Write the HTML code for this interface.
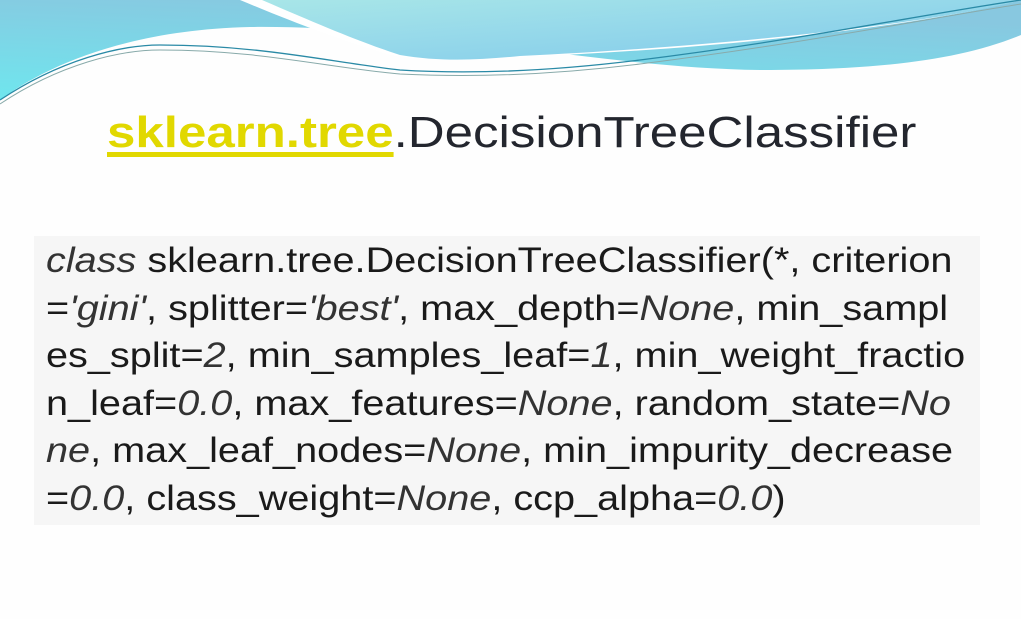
<!DOCTYPE html>
<html><head><meta charset="utf-8"><style>
html,body{margin:0;padding:0}
body{width:1021px;height:619px;overflow:hidden;background:#fefefe;position:relative;font-family:"Liberation Sans",sans-serif}
svg{position:absolute;left:0;top:0}
.title{position:absolute;left:107px;top:105px;font-size:44px;color:#23262e;white-space:nowrap;line-height:56px;transform:scaleX(1.16);transform-origin:0 0}
.title b{color:#e1d800;text-decoration:underline;text-decoration-thickness:5px;text-underline-offset:5px}
.box{position:absolute;left:34px;top:236px;width:946px;height:289px;background:#f6f6f6}
.code{position:absolute;left:46px;top:237px;font-size:35.5px;line-height:47.6px;color:#1a1a1a;white-space:pre;transform:scaleX(1.117);transform-origin:0 0}
i{font-style:italic;color:#333}
</style></head><body>
<svg width="1021" height="130" viewBox="0 0 1021 130">
<defs>
<linearGradient id="g1" x1="0" y1="1" x2="0.4" y2="0"><stop offset="0" stop-color="#6fe6ee"/><stop offset="1" stop-color="#88c8e0"/></linearGradient>
<linearGradient id="g2" x1="0" y1="0" x2="1" y2="1"><stop offset="0" stop-color="#a8e6e8"/><stop offset="1" stop-color="#7fc8ec"/></linearGradient>
</defs>
<path d="M0,0 H1021 V35 C960,60 880,70 760,70 C600,68 420,25 250,27 C120,30 40,70 0,100 Z" fill="url(#g1)"/>
<path d="M240,0 C300,25 340,40 390,55 C430,62 460,60 500,58 C700,50 900,30 1021,0 Z" fill="#fff"/>
<path d="M262,0 C320,25 360,42 400,55 C440,62 480,60 520,56 C750,45 950,20 1021,0 Z" fill="url(#g2)"/>
<path d="M0,100 C60,60 120,45 160,45 C260,45 330,62 400,70 C480,75 560,70 640,60 C800,40 920,15 1021,0" fill="none" stroke="#2a8aa6" stroke-width="1.3"/>
<path d="M0,104 C60,64 120,50 160,50 C260,50 330,68 400,74 C480,78 560,74 640,64 C800,44 920,20 1021,4" fill="none" stroke="#8aa" stroke-width="1"/>
</svg>
<div class="title"><b>sklearn.tree</b>.DecisionTreeClassifier</div>
<div class="box"></div>
<div class="code"><i>class</i> sklearn.tree.DecisionTreeClassifier(*, criterion
=<i>'gini'</i>, splitter=<i>'best'</i>, max_depth=<i>None</i>, min_sampl
es_split=<i>2</i>, min_samples_leaf=<i>1</i>, min_weight_fractio
n_leaf=<i>0.0</i>, max_features=<i>None</i>, random_state=<i>No</i>
<i>ne</i>, max_leaf_nodes=<i>None</i>, min_impurity_decrease
=<i>0.0</i>, class_weight=<i>None</i>, ccp_alpha=<i>0.0</i>)</div>
</body></html>
